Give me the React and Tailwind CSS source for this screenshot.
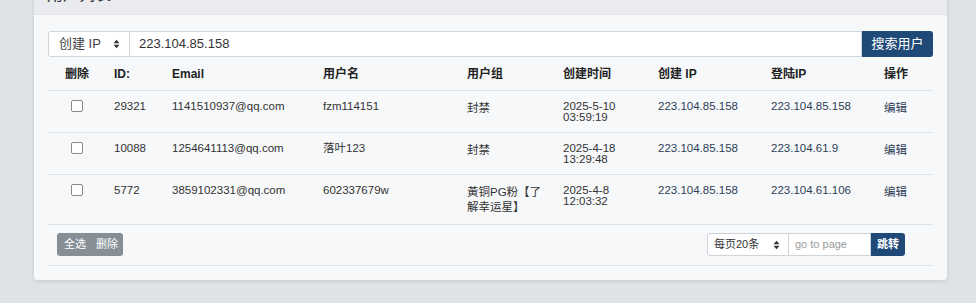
import React from 'react';

const rows = [
  { id: '29321', email: '1141510937@qq.com', name: 'fzm114151', group: '封禁', date: '2025-5-10', time: '03:59:19', cip: '223.104.85.158', lip: '223.104.85.158' },
  { id: '10088', email: '1254641113@qq.com', name: '落叶123', group: '封禁', date: '2025-4-18', time: '13:29:48', cip: '223.104.85.158', lip: '223.104.61.9' },
  { id: '5772', email: '3859102331@qq.com', name: '602337679w', group: '黃铜PG粉【了解幸运星】', date: '2025-4-8', time: '12:03:32', cip: '223.104.85.158', lip: '223.104.61.106' },
];

const cols = [58, 58, 151, 144, 96, 95, 113, 113, 57];
const heads = ['删除', 'ID:', 'Email', '用户名', '用户组', '创建时间', '创建 IP', '登陆IP', '操作'];

const Arrows = ({ className }) => (
  <svg viewBox="0 0 8 12" className={className} fill="currentColor">
    <path d="M4 1 L7.5 5 H0.5 Z" />
    <path d="M4 11 L7.5 7 H0.5 Z" />
  </svg>
);

export default function App() {
  return (
    <div
      className="min-h-[303px] bg-[#dfe2e6] pb-[23px]"
      style={{ fontFamily: '"Liberation Sans", "Noto Sans CJK SC", sans-serif' }}
    >
      <div className="ml-[34px] w-[913px] -mt-[29px] bg-[#f7f8fa] rounded-b-[3px] shadow-[0_1px_4px_rgba(0,0,0,0.12)]">
        {/* header */}
        <div className="h-[44px] flex items-center px-[13px] pt-[4px] bg-[#e9ebee] border-b border-[#e3e5e8] text-[16px] text-[#333]">
          用户列表
        </div>

        <div className="px-[14px] pt-[16px] pb-[14px]">
          {/* search */}
          <div className="flex h-[26px] text-[13px]">
            <div className="w-[82px] flex items-center justify-between pl-[10px] pr-[9px] bg-white border border-[#ced4da] rounded-l-[3px] text-[#444]">
              <span>创建 IP</span>
              <Arrows className="w-[7px] h-[10px] text-[#333]" />
            </div>
            <div className="flex-1 flex items-center pl-[9px] bg-white border border-l-0 border-[#ced4da] text-[#333]">
              223.104.85.158
            </div>
            <button className="w-[71px] bg-[#1f4a78] text-white rounded-r-[3px]">搜索用户</button>
          </div>

          {/* table */}
          <table className="w-full table-fixed border-collapse text-[11.5px] text-[#333]">
            <colgroup>
              {cols.map((w, i) => (
                <col key={i} style={{ width: w }} />
              ))}
            </colgroup>
            <thead>
              <tr className="h-[33px] border-b border-[#dee2e6]">
                {heads.map((h, i) => (
                  <th
                    key={h}
                    className={`text-[12px] font-bold text-[#222] align-middle pt-[2px] ${i === 0 ? 'text-center' : 'text-left pl-[8px]'}`}
                  >
                    {h}
                  </th>
                ))}
              </tr>
            </thead>
            <tbody>
              {rows.map((r) => (
                <tr key={r.id} className="border-b border-[#dee2e6] align-top leading-[11px]">
                  <td className="pt-[9px] pb-[9px] text-center">
                    <span className="inline-block w-[12px] h-[12px] bg-white border border-[#8a8a8a] rounded-[2px]" />
                  </td>
                  <td className="pt-[10px] pl-[8px]">{r.id}</td>
                  <td className="pt-[10px] pl-[8px]">{r.email}</td>
                  <td className="pt-[10px] pl-[8px]">{r.name}</td>
                  <td className="pt-[10px] pl-[8px] pr-[6px] leading-[15px] pb-[9px]">{r.group}</td>
                  <td className="pt-[10px] pl-[8px] pb-[9px]">
                    {r.date}
                    <br />
                    {r.time}
                  </td>
                  <td className="pt-[10px] pl-[8px] text-[#2c3e56]">{r.cip}</td>
                  <td className="pt-[10px] pl-[8px] text-[#2c3e56]">{r.lip}</td>
                  <td className="pt-[10px] pl-[8px] text-[#2c3e56] leading-[15px]">编辑</td>
                </tr>
              ))}
            </tbody>
          </table>

          {/* footer */}
          <div className="flex items-center justify-between h-[41px] pl-[9px] pr-[28px] border-b border-[#dee2e6]">
            <div className="flex h-[23px] bg-[#868e96] rounded-[3px] text-white text-[11px]">
              <button className="pl-[7px] pr-[5px]">全选</button>
              <button className="pl-[5px] pr-[5px]">删除</button>
            </div>
            <div className="flex h-[23px] text-[11px]">
              <div className="w-[82px] flex items-center justify-between pl-[6px] pr-[8px] bg-white border border-[#ced4da] rounded-l-[3px] text-[#333]">
                <span>每页20条</span>
                <Arrows className="w-[7px] h-[10px] text-[#333]" />
              </div>
              <div className="w-[82px] flex items-center pl-[6px] bg-white border border-l-0 border-[#ced4da] text-[#9a9a9a]">
                go to page
              </div>
              <button className="w-[34px] bg-[#1f4a78] text-white font-bold rounded-r-[3px]">跳转</button>
            </div>
          </div>
        </div>
      </div>
    </div>
  );
}
